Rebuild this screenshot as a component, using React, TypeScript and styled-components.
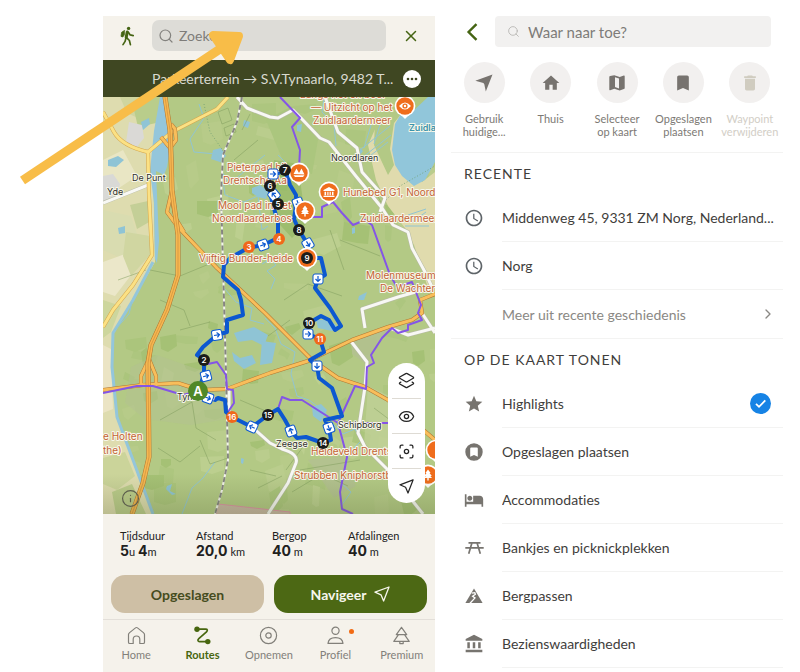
import React from "react";
import styled, { createGlobalStyle, css } from "styled-components";
import { Search, X, ChevronRight, Layers2, Eye, Focus, Info } from "lucide-react";
import {
  MdHome,
  MdBookmark,
  MdDelete,
  MdStar,
  MdHotel,
  MdAccountBalance,
  MdAccessTime,
} from "react-icons/md";

const GlobalStyle = createGlobalStyle`
  * { box-sizing: border-box; }
  body { margin: 0; background: #fff; font-variant-ligatures: none; }
  body, button, input { font-family: Lato, "Liberation Sans", sans-serif; }
  button { border: 0; padding: 0; background: none; cursor: pointer; color: inherit; }
  h2, p, ul, dl, dd { margin: 0; padding: 0; }
  svg { display: block; flex: none; }
`;

const Page = styled.main`
  position: relative;
  display: grid;
  grid-template-columns: minmax(0, 1fr) minmax(0, 1fr);
  gap: 16px;
  min-height: 100vh;
  padding: 16px 17px 0 103px;
`;

/* ---------- route planner ---------- */

const Planner = styled.section`
  display: flex;
  flex-direction: column;
  background: #f5f2eb;
`;

const TopBar = styled.header`
  display: flex;
  align-items: center;
  gap: 16px;
  height: 44px;
  padding: 0 15px 5px 15px;
  color: #456413;
`;

const IconButton = styled.button`
  display: grid;
  place-items: center;
  flex: none;
  color: #456413;
`;

const SearchField = styled.label<{ $tone: "grey" | "light" }>`
  display: flex;
  align-items: center;
  flex: 1;
  min-width: 0;
  height: 31px;
  color: #83827e;
  ${({ $tone }) =>
    $tone === "grey"
      ? css`
          gap: 5px;
          padding: 0 6px;
          border-radius: 7px;
          background: #dddcd7;
          font-size: 14px;
        `
      : css`
          gap: 8px;
          padding: 0 12px;
          border-radius: 4px;
          background: #f2f1f0;
          font-size: 15px;
        `}
`;

const SearchInput = styled.input`
  flex: 1;
  min-width: 0;
  padding: 0;
  border: 0;
  outline: 0;
  background: none;
  color: #3c3b38;
  font-size: inherit;
  &::placeholder { color: #7e7c79; opacity: 1; }
`;

const RouteBar = styled.div`
  display: flex;
  align-items: center;
  gap: 2px;
  height: 37px;
  padding: 0 14px 0 49px;
  background: #3f4722;
  color: #d9dad0;
`;

const RouteTitle = styled.p`
  flex: 1;
  overflow: hidden;
  white-space: nowrap;
  text-overflow: ellipsis;
  font-size: 14px;
`;

const MoreButton = styled.button`
  display: grid;
  place-items: center;
  flex: none;
  width: 18px;
  height: 18px;
  border-radius: 50%;
  && { background: #fff; }
`;

const MapArea = styled.div`
  position: relative;
  flex: 1;
  min-height: 416px;
  overflow: hidden;
`;

const MapSvg = styled.svg`
  position: absolute;
  inset: 0;
  width: 100%;
  height: 100%;
`;

const MapTools = styled.div`
  position: absolute;
  right: 10px;
  bottom: 11px;
  display: flex;
  flex-direction: column;
  width: 37px;
  padding: 0 4px;
  border-radius: 19px;
  background: #fff;
`;

const ToolButton = styled.button`
  display: grid;
  place-items: center;
  height: 35px;
  color: #252525;
  & + & { border-top: 1px solid #dedbd4; }
`;

const InfoButton = styled.button`
  position: absolute;
  left: 18px;
  bottom: 6px;
  color: #5c5d4d;
`;

const Stats = styled.dl`
  display: grid;
  grid-template-columns: repeat(4, 76px);
  padding: 14px 17px 15px;
  color: #21211d;
`;

const Stat = styled.div`
  display: flex;
  flex-direction: column;
`;

const StatLabel = styled.dt`
  font-size: 11px;
  line-height: 15px;
`;

const StatValue = styled.dd`
  font-size: 11px;
  line-height: 16px;
  white-space: nowrap;
`;

const Strong = styled.strong`
  font-family: Inter, "Liberation Sans", sans-serif;
  font-size: 14px;
  font-weight: 700;
`;

const Actions = styled.div`
  display: grid;
  grid-template-columns: 1fr 1fr;
  gap: 10px;
  padding: 0 8px 6px;
`;

const ActionButton = styled.button<{ $primary?: boolean }>`
  display: flex;
  align-items: center;
  justify-content: center;
  gap: 8px;
  height: 38px;
  border-radius: 14px;
  font-size: 14px;
  font-weight: 700;
  && {
    background: ${({ $primary }) => ($primary ? "#4c6814" : "#cebfa5")};
    color: ${({ $primary }) => ($primary ? "#f7f7ee" : "#454c20")};
  }
`;

const TabBar = styled.nav`
  display: grid;
  grid-template-columns: repeat(5, 1fr);
  height: 53px;
  border-top: 1px solid #e3dfd9;
`;

const Tab = styled.a<{ $active?: boolean }>`
  display: flex;
  flex-direction: column;
  align-items: center;
  gap: 3px;
  padding-top: 6px;
  color: ${({ $active }) => ($active ? "#47660f" : "#82807a")};
  font-size: 11px;
  line-height: 14px;
  font-weight: ${({ $active }) => ($active ? 700 : 400)};
  text-decoration: none;
`;

const TabIcon = styled.span`
  position: relative;
`;

const Dot = styled.span`
  position: absolute;
  top: 3px;
  right: -9px;
  width: 5px;
  height: 5px;
  border-radius: 50%;
  background: #f26b13;
`;

/* ---------- place search ---------- */

const Finder = styled.section`
  display: flex;
  flex-direction: column;
  min-width: 0;
  color: #3f3e3c;
`;

const FinderTop = styled.header`
  display: flex;
  align-items: center;
  gap: 17px;
  padding: 0 12px 0 15px;
`;

const Shortcuts = styled.div`
  display: flex;
  justify-content: space-between;
  height: 105px;
  padding: 15px 0 0;
`;

const Shortcut = styled.button<{ $faded?: boolean }>`
  display: flex;
  flex-direction: column;
  align-items: center;
  gap: 9px;
  width: 67px;
  font-size: 11px;
  line-height: 13px;
  && { color: ${({ $faded }) => ($faded ? "#d2cec6" : "#7c7974")}; }
`;

const ShortcutDisc = styled.span<{ $faded?: boolean }>`
  display: grid;
  place-items: center;
  width: 41px;
  height: 41px;
  border-radius: 50%;
  background: #f2f0ef;
  color: ${({ $faded }) => ($faded ? "#d0ccc0" : "#77736f")};
`;

const ShortcutLabel = styled.span`
  white-space: pre-line;
`;

const Group = styled.section`
  border-top: 1px solid #f3f3f2;
`;

const GroupTitle = styled.h2`
  height: 41px;
  padding-left: 13px;
  font-size: 14px;
  font-weight: 400;
  line-height: 42px;
  letter-spacing: 1px;
`;

const List = styled.ul`
  list-style: none;
`;

const Item = styled.li`
  padding-left: 12px;
`;

const rowLayout = css`
  display: grid;
  grid-template-columns: 22px minmax(0, 1fr);
  align-items: center;
  gap: 17px;
  width: 100%;
  color: #77746f;
`;

const RowButton = styled.button`
  ${rowLayout}
  text-align: left;
`;

const RowLabel = styled.label`
  ${rowLayout}
`;

const RowIcon = styled.span`
  display: grid;
  place-items: center;
`;

const RowBody = styled.span<{ $kind: "recent" | "more" | "option" }>`
  display: flex;
  align-items: center;
  justify-content: space-between;
  height: 48px;
  padding-right: ${({ $kind }) => ({ recent: 0, more: 7, option: 12 })[$kind]}px;
  border-bottom: ${({ $kind }) => ($kind === "more" ? 0 : 1)}px solid #f3f3f2;
  color: ${({ $kind }) => ($kind === "more" ? "#8a8884" : "#3f3e3c")};
  font-size: 14px;
`;

const RowText = styled.span`
  overflow: hidden;
  white-space: nowrap;
  text-overflow: ellipsis;
`;

const Toggle = styled.span`
  position: relative;
  width: 21px;
  height: 21px;
  svg { position: absolute; inset: 0; pointer-events: none; }
`;

const ToggleInput = styled.input`
  appearance: none;
  width: 21px;
  height: 21px;
  margin: 0;
  border-radius: 50%;
  & + svg { display: none; }
  &:checked { background: #1683e5; }
  &:checked + svg { display: block; }
`;

const ArrowOverlay = styled.svg`
  position: absolute;
  left: 0;
  top: 0;
  pointer-events: none;
`;

/* ---------- drawings ---------- */

const HikerIcon = () => (
  <svg width="18" height="20" viewBox="0 0 18 20" fill="none" stroke="currentColor" strokeLinecap="round" strokeLinejoin="round">
    <circle cx="10.600" cy="2.400" r="1.700" fill="currentColor" stroke="none" />
    <path d="M6.300 4.600 3.600 6.300 3 10.400l1.800.600 1.600-2.200z" fill="currentColor" strokeWidth="0.800" />
    <path d="M9.300 6 8.200 11.400" strokeWidth="3" />
    <path d="M10.500 6.400l1.700 2.500 3 .700M7.900 12.200l-.800 3.200-2.100 3.200M8.800 11.800l2.600 2.700 1 4.100" strokeWidth="1.700" />
  </svg>
);

const NearMeIcon = () => (
  <svg width="18" height="18" viewBox="0 0 18 18" fill="currentColor">
    <path d="M17.500.5 10.800 17.500 9.300 10.200 8.400 8.900.300 6.800z" />
  </svg>
);

const FoldedMapIcon = () => (
  <svg width="16" height="16" viewBox="0 0 16 16">
    <path
      fill="currentColor"
      fillRule="evenodd"
      d="M1.200.900Q.3 1 .3 2v12.600q0 .900.900.600L5.300 13.800l5.400 1.700 4.200-1.400q.800-.300.800-1.100V1.200q0-.900-.900-.700L10.700 2 5.300.3zM6 2.300l4 1.300v9.800l-4-1.300z"
    />
  </svg>
);

const PlaneIcon = ({ size = 16 }: { size?: number }) => (
  <svg width={size} height={size} viewBox="0 0 16 16" fill="none" stroke="currentColor" strokeWidth="1.3" strokeLinejoin="round">
    <path d="M15 1 1 6.2l6 2.6L9.6 15z" />
  </svg>
);

const HomeTabIcon = () => (
  <svg width="19" height="19" viewBox="0 0 19 19" fill="none" stroke="currentColor" strokeWidth="1.2" strokeLinejoin="round">
    <path d="M1.500 8.500Q1.500 7.500 2.300 6.900L8.500 1.900q1-.800 2 0l6.200 5q.800.600.800 1.600v7.700a1.300 1.300 0 0 1-1.300 1.300h-3.400v-4.200a3.300 3.300 0 0 0-6.600 0v4.200H2.800a1.300 1.300 0 0 1-1.300-1.300z" />
  </svg>
);

const RoutesTabIcon = () => (
  <svg width="19" height="19" viewBox="0 0 19 19" fill="none" stroke="currentColor" strokeWidth="1.7" strokeLinejoin="round">
    <path d="M4 3.2h8.6c2 0 2.2 1.4.9 2.6L5.8 12.6c-1.5 1.4-1 3 .8 3h8" />
    <circle cx="4" cy="3.2" r="2.7" fill="currentColor" stroke="none" />
    <circle cx="14.8" cy="15.6" r="2.7" fill="currentColor" stroke="none" />
  </svg>
);

const RecordTabIcon = () => (
  <svg width="19" height="19" viewBox="0 0 19 19" fill="none" stroke="currentColor" strokeWidth="1.2">
    <circle cx="9.5" cy="9.5" r="8.1" />
    <circle cx="9.5" cy="9.5" r="2.7" />
  </svg>
);

const ProfileTabIcon = () => (
  <svg width="19" height="19" viewBox="0 0 19 19" fill="none" stroke="currentColor" strokeWidth="1.2" strokeLinejoin="round">
    <circle cx="9.5" cy="4.8" r="3.6" />
    <path d="M2 17.4c.4-4 3.3-5.8 7.500-5.800s7.100 1.800 7.500 5.800z" />
  </svg>
);

const TreeTabIcon = () => (
  <svg width="19" height="19" viewBox="0 0 19 19" fill="none" stroke="currentColor" strokeWidth="1.2" strokeLinejoin="round">
    <path d="M9.500 1.300 4.300 8.700h10.400zM6.500 8.700 1.800 15.400h15.400l-4.700-6.700M7.800 15.400v2.200h3.400v-2.200" />
  </svg>
);

const BackIcon = () => (
  <svg width="12" height="18" viewBox="0 0 12 18" fill="none" stroke="currentColor" strokeWidth="2.400">
    <path d="M10.500 1.200 2.600 9l7.900 7.800" />
  </svg>
);

const SavedIcon = () => (
  <svg width="18" height="18" viewBox="0 0 18 18">
    <path fill="currentColor" fillRule="evenodd" d="M9 .3a8.700 8.700 0 1 1 0 17.400A8.700 8.700 0 0 1 9 .3zM6.200 4.400a1 1 0 0 0-1 1v8.300L9 12.100l3.800 1.600V5.400a1 1 0 0 0-1-1z" />
  </svg>
);

const PicnicIcon = () => (
  <svg width="19" height="14" viewBox="0 0 19 14" fill="none" stroke="currentColor" strokeWidth="1.700">
    <path d="M3.500 1.900h12M.3 6.900h18.400M6.900 2 3.700 12.800M12.100 2l3.200 10.800" />
  </svg>
);

const PassIcon = () => (
  <svg width="18" height="16" viewBox="0 0 18 16">
    <path fill="currentColor" d="M9 .6 17.600 15H.4z" />
    <path d="M6.700 5.200 9.800 4.700 10.400 6.300 7.600 8.200 10 9.900 4.800 15.500" fill="none" stroke="#fff" strokeWidth="1.300" />
  </svg>
);

/* ---------- map ---------- */

type Pt = [number, number];
type Field = { d: string; fill: string };

const makeFields = (): Field[] => {
  let seed = 41;
  const rnd = () => {
    seed = (seed * 16807) % 2147483647;
    return seed / 2147483647;
  };
  const fills = ["#abc57c", "#adc67f", "#bccf8f", "#b7cb89", "#a5c175", "#bacd8d"];
  return Array.from({ length: 120 }, () => {
    const x = 100 + rnd() * 330;
    const y = 95 + rnd() * 415;
    const w = 6 + rnd() * 20;
    const h = 4 + rnd() * 17;
    const s = (rnd() - 0.5) * 14;
    const pts: Pt[] = [[x, y], [x + w, y + s], [x + w - s / 2, y + h + s], [x + w / 2, y + h + 3], [x - s / 2, y + h]];
    return { d: `M${pts.map((p) => p.map(Math.round).join(" ")).join("L")}z`, fill: fills[Math.floor(rnd() * fills.length)] };
  });
};
const fields = makeFields();

const beige =
  "M103 97H165L153 158 155 262 133 300 113 333 112 367 117 417 133 460 153 514H103z";

const beigeFields = [
  ["#e9e6c4", "M103 160l20-10 14 26-18 12-16-4z"],
  ["#cfd59f", "M120 97h34l-5 26-22-10z"],
  ["#b9cd8b", "M134 110l20-13h8l-6 26-18 4z"],
  ["#d9dcb0", "M103 210l28 6 10 30-20 12-18-8z"],
  ["#d9d9d6", "M103 176l10-2 7 10-3 14-14 4z"],
  ["#dad9d6", "M129 122l13 3 2 13-8 10-10-6z"],
  ["#c4cf97", "M130 205l18-4 3 20-14 8z"],
  ["#ebe7c9", "M103 262l22-8 10 16-20 26-12-4z"],
  ["#d0d6a1", "M126 232l24 4 1 18-20 22-8-20z"],
  ["#cdd69d", "M103 300l18 6-10 26-8 6z"],
  ["#ebe4c4", "M103 345l8 4 2 60-10 4z"],
  ["#cbd49a", "M103 458l22-6 10 24-18 14-14-6z"],
  ["#bccd8c", "M112 492l20-8 14 30h-30z"],
];

const motorway = [
  "M165 97L170 130 171 155 172 190 178 235 178 275 167 310 151 345 148 363 149 457 143 483 132 514",
  "M172 190L167 212 178 227 217 268 265 313 312 360 338 378 365 387 388 400 435 440",
  "M172 200L176 219 184 232",
  "M161 137L170 148 176 140 175 129 171 124",
  "M149 359L141 376V385H156V376z",
  "M103 390L143 385 178 383 200 390 227 389 270 373 308 361 352 340 388 327 412 320 422 313 420 300 435 294",
];

const yellowRoads = [
  "M103 112L114 132Q122 146 148 152L172 132 217 109 228 97",
  "M148 152L149 195 152 255 133 285 113 310 103 327",
];

const whiteRoads = [
  "M237 97L247 108 270 117 278 118 293 110 301 118 320 138 329 142 355 175 382 208 393 225 408 232 412 248 425 272 432 287",
  "M325 97L338 132 357 148 362 172 378 190 385 198 380 212",
  "M433 287L398 297 362 309 365 328",
  "M422 313L435 333M390 328L408 335 435 328",
  "M350 340L367 362 365 387 358 433 365 447 388 470 423 514",
  "M252 427L270 443 282 449Q299 454 296 463L288 483 268 514",
  "M103 203L148 185",
  "M229 389V414",
];

const purpleRoutes = [
  "M280 97L300 118 292 127 300 150 299 168",
  "M312 217H322V207L333 202 342 213 353 225 365 220 372 225 390 275 397 287 412 282 421 305 418 313 422 320 408 325V330L398 333 392 328 382 338 371 355 374 363 367 367 366 389 355 386 338 423 347 457 340 492 342 509 353 514",
  "M103 393L137 386H153L183 395 198 391",
  "M208 364L217 362 226 375 227 389 233 390 234 403 228 412",
  "M278 409L282 397 290 400 302 400 338 423H388",
];

const route =
  "M198 391L204 375V359L197 355 203 347 217 335 227 332V320L243 315 241 300 238 290 223 277 224 265 230 258 248 248 263 245 278 238V222L273 205 270 192 268 180 274 175 285 170 290 185 296 195V205L294 219 299 230 308 245 307 258 321 258 325 275 318 279 315 288 330 308 341 326 335 330 329 320 321 316 309 323 308 334 320 339 324 352 310 360 317 366 319 378 332 388 342 416 325 420 329 428 331 440 323 443 306 437 297 438 291 431 285 420 278 409 268 415 252 427 232 417 226 412 225 400 218 398 215 400 207 397";

const ponds = [
  "M213 150l8-2 5 8-6 6-9-3z",
  "M234 333l20-6 14 8-4 11-12-6-14 2z",
  "M232 352l8 6 12-3 4 8-12 6-10-8z",
  "M262 341l14 2-4 20-12 2z",
  "M316 320l14 0 8 7-6 4-14-3z",
  "M252 188l8-3 8 6-2 8-8-2-6-4z",
  "M244 120l6 2-2 6-5-2zM141 122l8-4 1 6-7 6z",
  "M108 160l10-4 6 4-8 7-8-1zM118 228l7-2v7l-6 1z",
  "M352 228l3-1v6l-3 1zM359 296l8-4-3 8-6 0zM360 148l3 3-3 4zM297 125l5-1-1 8-4-1z",
  "M167 486l5-2-2 7 6 3-4 1-6-6zM241 458l3 1-1 5-2-1z",
  "M312 407l9-3 6 6-6 12-8-6z",
];

const streams = [
  "M199 104L204 118 190 139 194 152 216 154 222 163",
  "M265 155L240 175 230 185 222 172 225 195 244 202 258 196 262 230 268 226",
  "M262 264l8-5 6 6-9 6 8 8-4 10",
  "M224 288l12 14 16 6-2 12 14 4",
  "M265 318l10 10 6 16 14 8-4 22 6 22 12 4 16 12 8 12 10 10 12-5 6 12-12 12-8 30 10 9-10 14",
  "M215 462L203 478 192 488 182 514",
  "M324 98l-2 14 12 12 2 22",
  "M360 150l30-24M363 157l28-22M372 122l-8 26M382 118l-8 26M362 162l26-20M405 226h24M408 215l18-6M412 222l14-10M398 216l32 4M115 330l14-16 3-12M278 155l14 14",
];

const shore = "M380 97H410L404 122 396 150 404 166 422 182 435 172V285H427L414 245 405 228 388 206 376 180 368 145 380 118z";
const lake = "M435 97H428L412 112 402 112 395 124 392 150 395 165 402 176 414 186 425 180 435 162z";

const wayArrows: [number, number, number][] = [
  [217, 335, -10],
  [206, 376, -15],
  [208, 398, 20],
  [263, 245, -20],
  [273, 174, 0],
  [274, 195, 230],
  [298, 203, 70],
  [308, 244, 60],
  [318, 279, 90],
  [308, 334, 0],
  [317, 366, 90],
  [329, 428, 70],
  [291, 431, 250],
  [252, 427, 205],
];

const stops: { n: string; x: number; y: number; hot?: boolean }[] = [
  { n: "2", x: 204, y: 360 },
  { n: "3", x: 249, y: 247, hot: true },
  { n: "4", x: 279, y: 239, hot: true },
  { n: "5", x: 278, y: 204 },
  { n: "6", x: 270, y: 186 },
  { n: "7", x: 285, y: 170 },
  { n: "8", x: 299, y: 230 },
  { n: "10", x: 309, y: 323 },
  { n: "11", x: 320, y: 339, hot: true },
  { n: "14", x: 323, y: 443 },
  { n: "15", x: 268, y: 415 },
  { n: "16", x: 232, y: 417, hot: true },
];

const poiLabels: [string, number, number][] = [
  ["Langs riet en boer", 300, 98],
  ["— Uitzicht op het", 311, 111],
  ["Zuidlaardermeer", 313, 124],
  ["Pieterpad bij", 227, 171],
  ["Drentsche Aa", 223, 184],
  ["Mooi pad in het", 218, 209],
  ["Noordlaarderbos", 212, 222],
  ["Vijftig Bunder-heide", 199, 262],
  ["Hunebed G1, Noord", 343, 196],
  ["Zuidlaardermeer", 360, 222],
  ["Molenmuseum", 366, 279],
  ["De Wachter", 380, 292],
  ["e Holten", 103, 440],
  ["the)", 103, 454],
  ["Heideveld Drents", 311, 455],
  ["Strubben Kniphorstb", 294, 479],
];

const townLabels: [string, number, number][] = [
  ["De Punt", 132, 181],
  ["Yde", 107, 195],
  ["Noordlaren", 331, 161],
  ["Tynaarlo", 177, 400],
  ["Schipborg", 338, 428],
  ["Zeegse", 276, 447],
];

const MapLabel = styled.text<{ $kind: "poi" | "town" | "water" }>`
  font-family: Inter, "Liberation Sans", sans-serif;
  font-size: ${({ $kind }) => ($kind === "poi" ? 10 : 9)}px;
  font-weight: ${({ $kind }) => ($kind === "water" ? 600 : 400)};
  fill: ${({ $kind }) => ({ poi: "#c46335", town: "#30302c", water: "#3b93ab" })[$kind]};
  stroke: #f7f7e9;
  stroke-width: 2px;
  stroke-linejoin: round;
  paint-order: stroke;
`;

const StopText = styled.text`
  font-family: Inter, "Liberation Sans", sans-serif;
  font-size: 8px;
  font-weight: 600;
  fill: #fff;
  text-anchor: middle;
`;

const StartText = styled(StopText)`
  font-size: 13px;
`;

const Lines = ({ paths, color, width, dash }: { paths: string[]; color: string; width: number; dash?: string }) => (
  <g fill="none" stroke={color} strokeWidth={width} strokeDasharray={dash} strokeLinejoin="round">
    {paths.map((d) => (
      <path key={d} d={d} />
    ))}
  </g>
);

const Poi = ({ x, y, children }: { x: number; y: number; children?: React.ReactNode }) => (
  <g transform={`translate(${x} ${y})`}>
    <path d="M-5 8L0 13 5 8z" fill="#fff" />
    <circle r="10.400" fill="#fff" />
    <circle r="8.700" fill="#ef6d1c" />
    <g fill="#fff" stroke="none">{children}</g>
  </g>
);

const TreeGlyph = () => <path d="M0-5.500 2.600-2H1.500L3.800 1H2.300L4 3H.7v2.400H-.7V3H-4l1.700-2h-1.500L-1.500-2h-1.100z" />;

const RouteMap = () => (
  <MapSvg viewBox="103 97 332 417" preserveAspectRatio="xMidYMid slice" role="img" aria-label="Kaart van de route">
    <defs>
      <linearGradient id="shade" x1="0" y1="0" x2="0" y2="1">
        <stop offset="0" stopColor="#4d5a2c" stopOpacity="0" />
        <stop offset="1" stopColor="#4d5a2c" stopOpacity="0.250" />
      </linearGradient>
    </defs>
    <path d="M100 90h340v430H100z" fill="#b3c985" />
    {fields.map((f, i) => (
      <path key={i} d={f.d} fill={f.fill} />
    ))}
    <path d="M131 367l26-12 40 14 30 6v44l-36 6-46-6-20-16z" fill="#b3c191" opacity="0.500" />
    <path d="M266 120l26-14 26 34-6 34-26-6z" fill="#abc67e" />
    <path d="M274 160l24 4 8 60-14 14-22-24z" fill="#8fb560" opacity="0.600" />
    <path d="M352 340l38-12-24 36-14-10zM308 460l34-4 14 30-22 12z" fill="#b4bf93" opacity="0.700" />
    <path d="M368 386l50 24v30l-30 20-24-16z" fill="#c2d198" opacity="0.700" />
    <path d={beige} fill="#dedcaf" />
    {beigeFields.map(([fill, d]) => (
      <path key={d} d={d} fill={fill} />
    ))}
    <path d={shore} fill="#e0dbad" />
    <path d="M376 97h30l-4 16-8 10-4 26 4 16-6 10-14-30z" fill="#b3c985" />
    <path d={lake} fill="#91c6da" />
    <path d="M160 97h6l2 40 2 12-3 18-3 8-8-4 3 70-2 22-2-4-1-56-4-32 4-40z" fill="#94c6db" />
    <Lines
      paths={["M153 262L133 300 113 333 112 367 117 417 133 460 153 514"]}
      color="#94c6db"
      width={3}
    />
    <path d="M218 504l72 8v4h-74z" fill="#c8b6a3" stroke="#dc91a4" />
    {ponds.map((d) => (
      <path key={d} d={d} fill="#8fc4d5" />
    ))}
    <Lines paths={streams} color="#91c5d2" width={1} />
    <Lines
      paths={[
        "M150 270l30 6 34-14M160 420l32-18 4 26 20 12M158 448l22 14 20-16M240 400l28 12M300 470l60-10M250 470l26 6M284 300l24-16 34 12M340 240l40 16M234 160l24-20M250 114l-8 16M330 230l14 40M292 492l30-18 26 12M374 408l40 30M180 330l30-8M118 280l28-10M218 112l4 12 10-4-4-12zM224 128l10-4 2 8-10 4z",
        "M200 440l10 24 18-6M258 488l24-12M308 440l-22 30M370 182l12 22M268 336l22-16M160 300l24 10 6 16",
      ]}
      color="#7f9b5c"
      width={0.5}
    />
    <Lines paths={["M380 206L400 186 435 166M204 104L210 132 224 152"]} color="#6f9e72" width={0.8} dash="1 2" />
    <Lines paths={whiteRoads} color="#b6b9a5" width={4} />
    <Lines paths={whiteRoads} color="#f8f8f4" width={3} />
    <Lines paths={yellowRoads} color="#d3a54c" width={4} />
    <Lines paths={yellowRoads} color="#fbe184" width={3} />
    <Lines paths={motorway} color="#b37731" width={4} />
    <Lines paths={motorway} color="#f8be5b" width={3} />
    <Lines paths={[motorway[0]]} color="#b37731" width={5} />
    <Lines paths={[motorway[0]]} color="#f6b750" width={4} />
    <Lines paths={[motorway[0]]} color="#c98a3b" width={0.6} />
    <Lines paths={["M242 97L237 122 223 155 221 195 223 265 226 373 228 460 222 490 215 514"]} color="#f3f3ef" width={2} />
    <Lines paths={["M242 97L237 122 223 155 221 195 223 265 226 373 228 460 222 490 215 514"]} color="#85857f" width={2} dash="5 3" />
    <Lines paths={purpleRoutes} color="#8455e6" width={2} />
    <Lines paths={[route]} color="#0c58d0" width={4} />
    {townLabels.map(([t, x, y]) => (
      <MapLabel key={t} $kind="town" x={x} y={y}>
        {t}
      </MapLabel>
    ))}
    {poiLabels.map(([t, x, y]) => (
      <MapLabel key={`${t}${y}`} $kind="poi" x={x} y={y}>
        {t}
      </MapLabel>
    ))}
    <MapLabel $kind="water" x={409} y={131}>
      Zuidla
    </MapLabel>
    {wayArrows.map(([x, y, r]) => (
      <g key={`${x}-${y}`} transform={`translate(${x} ${y}) rotate(${r})`}>
        <rect x="-5" y="-5" width="10" height="10" rx="2" fill="#fff" stroke="#0c58d0" />
        <path d="M-3 0H2.500M0-2.500L2.500 0 0 2.500" fill="none" stroke="#0c58d0" strokeWidth="1.200" />
      </g>
    ))}
    <Poi x={405} y={106}>
      <path d="M-6 0Q0-7 6 0 0 7-6 0z" />
      <circle r="2.600" fill="#ef6d1c" />
      <circle r="1.200" />
    </Poi>
    <Poi x={299} y={173}>
      <path d="M-5.500 1L-2.500-4.500 0 0 2.500-4.500 5.500 1.500zM-5.500 2.300h11l-1.500 1.700h-8z" />
    </Poi>
    <Poi x={329} y={192}>
      <path d="M0-5L5.500-2v1h-11v-1zM-4.500-.3h1.600v3.600h-1.600zM-1.700-.3h1.200v3.600h-1.200zM.6-.3h1.200v3.600H.6zM3-.3h1.500v3.600H3zM-5.500 3.800h11V5h-11z" />
    </Poi>
    <Poi x={305} y={211}>
      <TreeGlyph />
    </Poi>
    <Poi x={307} y={258} />
    <Poi x={436} y={450} />
    <Poi x={428} y={475}>
      <TreeGlyph />
    </Poi>
    <circle cx="307" cy="258" r="6" fill="#1d1d1b" />
    <StopText x={307} y={261}>
      9
    </StopText>
    {stops.map((s) => (
      <g key={s.n}>
        <circle cx={s.x} cy={s.y} r="6" fill={s.hot ? "#f0681b" : "#1b1b19"} />
        <StopText x={s.x} y={s.y + 3}>
          {s.n}
        </StopText>
      </g>
    ))}
    <circle cx="198" cy="391" r="10" fill="#508827" />
    <StartText x={198} y={396}>
      A
    </StartText>
    <path d="M100 474h340v42H100z" fill="url(#shade)" />
  </MapSvg>
);

/* ---------- data ---------- */

const stats: { label: string; parts: [string, string][] }[] = [
  { label: "Tijdsduur", parts: [["5", "u "], ["4", "m"]] },
  { label: "Afstand", parts: [["20,0", " km"]] },
  { label: "Bergop", parts: [["40", " m"]] },
  { label: "Afdalingen", parts: [["40", " m"]] },
];

const tabs = [
  { label: "Home", icon: <HomeTabIcon /> },
  { label: "Routes", icon: <RoutesTabIcon />, active: true },
  { label: "Opnemen", icon: <RecordTabIcon /> },
  { label: "Profiel", icon: <ProfileTabIcon />, dot: true },
  { label: "Premium", icon: <TreeTabIcon /> },
];

const shortcuts = [
  { label: "Gebruik\nhuidige...", icon: <NearMeIcon /> },
  { label: "Thuis", icon: <MdHome size={20} /> },
  { label: "Selecteer\nop kaart", icon: <FoldedMapIcon /> },
  { label: "Opgeslagen\nplaatsen", icon: <MdBookmark size={20} /> },
  { label: "Waypoint\nverwijderen", icon: <MdDelete size={20} />, faded: true },
];

const recents = ["Middenweg 45, 9331 ZM Norg, Nederland...", "Norg"];

const categories = [
  { label: "Highlights", icon: <MdStar size={20} />, on: true },
  { label: "Opgeslagen plaatsen", icon: <SavedIcon /> },
  { label: "Accommodaties", icon: <MdHotel size={20} /> },
  { label: "Bankjes en picknickplekken", icon: <PicnicIcon /> },
  { label: "Bergpassen", icon: <PassIcon /> },
  { label: "Bezienswaardigheden", icon: <MdAccountBalance size={20} /> },
];

export default function App() {
  return (
    <>
      <GlobalStyle />
      <Page>
        <Planner>
          <TopBar>
            <IconButton aria-label="Sport: wandelen">
              <HikerIcon />
            </IconButton>
            <SearchField $tone="grey">
              <Search size={16} strokeWidth={1.800} />
              <SearchInput type="search" aria-label="Zoeken" placeholder="Zoeken" />
            </SearchField>
            <IconButton aria-label="Sluiten">
              <X size={18} strokeWidth={2} />
            </IconButton>
          </TopBar>
          <RouteBar>
            <RouteTitle>Parkeerterrein → S.V.Tynaarlo, 9482 T...</RouteTitle>
            <MoreButton aria-label="Meer opties">
              <svg width="12" height="4" viewBox="0 0 12 4" fill="#3f4722">
                <circle cx="2" cy="2" r="1.300" />
                <circle cx="6" cy="2" r="1.300" />
                <circle cx="10" cy="2" r="1.300" />
              </svg>
            </MoreButton>
          </RouteBar>
          <MapArea>
            <RouteMap />
            <InfoButton aria-label="Kaartinformatie">
              <Info size={19} strokeWidth={1.500} />
            </InfoButton>
            <MapTools>
              <ToolButton aria-label="Kaartlagen">
                <Layers2 size={17} strokeWidth={1.800} />
              </ToolButton>
              <ToolButton aria-label="Weergave">
                <Eye size={17} strokeWidth={1.800} />
              </ToolButton>
              <ToolButton aria-label="Centreren">
                <Focus size={17} strokeWidth={1.800} />
              </ToolButton>
              <ToolButton aria-label="Mijn locatie">
                <PlaneIcon size={15} />
              </ToolButton>
            </MapTools>
          </MapArea>
          <Stats>
            {stats.map((s) => (
              <Stat key={s.label}>
                <StatLabel>{s.label}</StatLabel>
                <StatValue>
                  {s.parts.map(([n, unit]) => (
                    <React.Fragment key={unit}>
                      <Strong>{n}</Strong>
                      {unit}
                    </React.Fragment>
                  ))}
                </StatValue>
              </Stat>
            ))}
          </Stats>
          <Actions>
            <ActionButton>Opgeslagen</ActionButton>
            <ActionButton $primary>
              Navigeer <PlaneIcon />
            </ActionButton>
          </Actions>
          <TabBar>
            {tabs.map((t) => (
              <Tab key={t.label} href="#" $active={t.active}>
                <TabIcon>
                  {t.icon}
                  {t.dot && <Dot />}
                </TabIcon>
                {t.label}
              </Tab>
            ))}
          </TabBar>
        </Planner>

        <Finder>
          <FinderTop>
            <IconButton aria-label="Terug">
              <BackIcon />
            </IconButton>
            <SearchField $tone="light">
              <Search size={13} strokeWidth={1.500} color="#b3b1ae" />
              <SearchInput type="search" aria-label="Waar naar toe?" placeholder="Waar naar toe?" />
            </SearchField>
          </FinderTop>
          <Shortcuts>
            {shortcuts.map((s) => (
              <Shortcut key={s.label} $faded={s.faded} disabled={s.faded}>
                <ShortcutDisc $faded={s.faded}>{s.icon}</ShortcutDisc>
                <ShortcutLabel>{s.label}</ShortcutLabel>
              </Shortcut>
            ))}
          </Shortcuts>
          <Group>
            <GroupTitle>RECENTE</GroupTitle>
            <List>
              {recents.map((r) => (
                <Item key={r}>
                  <RowButton>
                    <RowIcon>
                      <MdAccessTime size={20} color="#5e6468" />
                    </RowIcon>
                    <RowBody $kind="recent">
                      <RowText>{r}</RowText>
                    </RowBody>
                  </RowButton>
                </Item>
              ))}
              <Item>
                <RowButton>
                  <RowIcon />
                  <RowBody $kind="more">
                    <RowText>Meer uit recente geschiedenis</RowText>
                    <ChevronRight size={16} strokeWidth={2} />
                  </RowBody>
                </RowButton>
              </Item>
            </List>
          </Group>
          <Group>
            <GroupTitle>OP DE KAART TONEN</GroupTitle>
            <List>
              {categories.map((c) => (
                <Item key={c.label}>
                  <RowLabel>
                    <RowIcon>{c.icon}</RowIcon>
                    <RowBody $kind="option">
                      <RowText>{c.label}</RowText>
                      <Toggle>
                        <ToggleInput type="checkbox" defaultChecked={c.on} />
                        <svg width="21" height="21" viewBox="0 0 21 21" fill="none" stroke="#fff" strokeWidth="1.800">
                          <path d="M6 10.800l3 3 6.300-6.400" />
                        </svg>
                      </Toggle>
                    </RowBody>
                  </RowLabel>
                </Item>
              ))}
            </List>
          </Group>
        </Finder>

        <ArrowOverlay width="260" height="200" viewBox="0 0 260 200" aria-hidden="true">
          <path d="M22.500 180.500L226 45" stroke="#f8bd48" strokeWidth="9" />
          <path d="M213 35L239 36 230 60z" fill="#f8bd48" stroke="#f8bd48" strokeWidth="8" strokeLinejoin="round" />
        </ArrowOverlay>
      </Page>
    </>
  );
}
